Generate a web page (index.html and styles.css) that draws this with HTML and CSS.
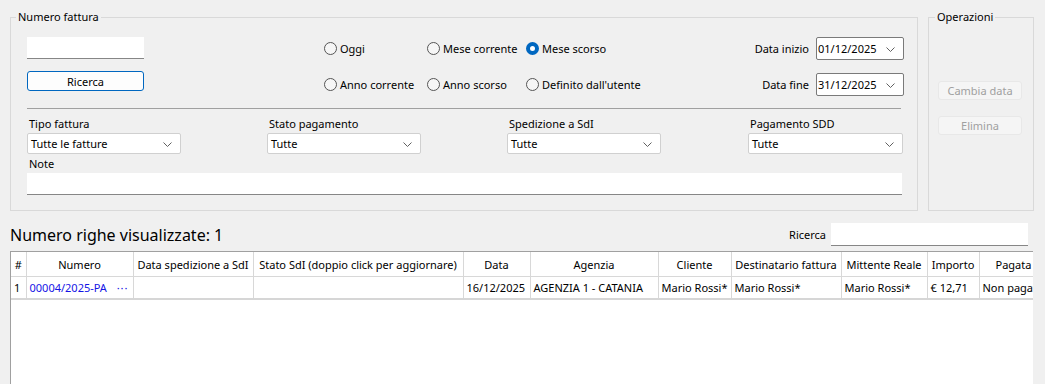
FILE: index.html
```html
<!DOCTYPE html>
<html lang="it">
  <head>
    <meta charset="UTF-8" />
    <title>Fatture</title>
    <link rel="stylesheet" href="styles.css">
  </head>
  <body>
    <div class="top">
      <fieldset class="box box-search">
        <legend>Numero fattura</legend>

        <div class="search-row">
          <div class="num-col">
            <input type="text" class="flat-input num-input" />
            <button class="btn-primary">Ricerca</button>
          </div>

          <div class="periods">
            <label class="radio"><span class="dot"></span>Oggi</label>
            <label class="radio"><span class="dot"></span>Mese corrente</label>
            <label class="radio"><span class="dot checked"></span>Mese scorso</label>
            <label class="radio"><span class="dot"></span>Anno corrente</label>
            <label class="radio"><span class="dot"></span>Anno scorso</label>
            <label class="radio"><span class="dot"></span>Definito dall'utente</label>
          </div>

          <div class="dates">
            <span class="date-label">Data inizio</span>
            <div class="combo combo-date">01/12/2025<svg class="chev" width="9" height="5" viewBox="0 0 9 5"><polyline points="0.5,0.5 4.5,4.5 8.5,0.5" /></svg></div>
            <span class="date-label">Data fine</span>
            <div class="combo combo-date">31/12/2025<svg class="chev" width="9" height="5" viewBox="0 0 9 5"><polyline points="0.5,0.5 4.5,4.5 8.5,0.5" /></svg></div>
          </div>
        </div>

        <hr class="sep" />

        <div class="filters">
          <div class="filter">
            <span class="field-label">Tipo fattura</span>
            <div class="combo">Tutte le fatture<svg class="chev" width="9" height="5" viewBox="0 0 9 5"><polyline points="0.5,0.5 4.5,4.5 8.5,0.5" /></svg></div>
          </div>
          <div class="filter">
            <span class="field-label">Stato pagamento</span>
            <div class="combo">Tutte<svg class="chev" width="9" height="5" viewBox="0 0 9 5"><polyline points="0.5,0.5 4.5,4.5 8.5,0.5" /></svg></div>
          </div>
          <div class="filter">
            <span class="field-label">Spedizione a SdI</span>
            <div class="combo">Tutte<svg class="chev" width="9" height="5" viewBox="0 0 9 5"><polyline points="0.5,0.5 4.5,4.5 8.5,0.5" /></svg></div>
          </div>
          <div class="filter">
            <span class="field-label">Pagamento SDD</span>
            <div class="combo combo-wide">Tutte<svg class="chev" width="9" height="5" viewBox="0 0 9 5"><polyline points="0.5,0.5 4.5,4.5 8.5,0.5" /></svg></div>
          </div>
        </div>

        <span class="field-label note-label">Note</span>
        <input type="text" class="flat-input note-input" />
      </fieldset>

      <fieldset class="box box-ops">
        <legend>Operazioni</legend>
        <button class="btn-disabled btn-first" disabled>Cambia data</button>
        <button class="btn-disabled" disabled>Elimina</button>
      </fieldset>
    </div>

    <div class="list-head">
      <h2 class="count">Numero righe visualizzate: 1</h2>
      <span class="search-label">Ricerca</span>
      <input type="text" class="flat-input list-search" />
    </div>

    <div class="grid">
      <table>
        <colgroup>
          <col class="w-idx"><col class="w-num"><col class="w-sped"><col class="w-stato">
          <col class="w-data"><col class="w-agenzia"><col class="w-cliente"><col class="w-dest">
          <col class="w-mitt"><col class="w-importo"><col class="w-pagata">
        </colgroup>
        <thead>
          <tr>
            <th>#</th>
            <th>Numero</th>
            <th>Data spedizione a SdI</th>
            <th>Stato SdI (doppio click per aggiornare)</th>
            <th>Data</th>
            <th>Agenzia</th>
            <th>Cliente</th>
            <th>Destinatario fattura</th>
            <th>Mittente Reale</th>
            <th>Importo</th>
            <th class="th-right">Pagata</th>
          </tr>
        </thead>
        <tbody>
          <tr>
            <td>1</td>
            <td class="link-cell"><span class="link">00004/2025-PA</span><span class="more">···</span></td>
            <td></td>
            <td></td>
            <td>16/12/2025</td>
            <td>AGENZIA 1 - CATANIA</td>
            <td>Mario Rossi*</td>
            <td>Mario Rossi*</td>
            <td>Mario Rossi*</td>
            <td>€ 12,71</td>
            <td>Non pagata</td>
          </tr>
        </tbody>
      </table>
    </div>
  </body>
</html>
```

FILE: styles.css
```css
body {
  margin: 0;
  background: #f0f0f0;
  font-family: "Segoe UI", "Noto Sans", sans-serif;
  font-size: 11px;
  color: #000;
  overflow: hidden;
  height: 384px;
}
.top {
  display: flex;
  gap: 10px;
  padding: 10px 0 0 10px;
}
.box {
  margin: 0;
  border: 1px solid #d9d9d9;
  box-sizing: border-box;
  height: 201px;
}
.box legend {
  padding: 0 2px;
  line-height: 14px;
}
.box-search {
  width: 908px;
  padding: 13px 13px 0 16px;
}
.box-search legend {
  margin-left: -11px;
}
.box-ops {
  width: 106px;
  padding: 0 10px 0 9px;
  display: flex;
  flex-direction: column;
}
.box-ops legend {
  margin-left: -3px;
}
.search-row {
  display: flex;
  height: 60px;
}
.num-col {
  display: flex;
  flex-direction: column;
  gap: 12px;
  width: 117px;
}
.flat-input {
  display: block;
  box-sizing: border-box;
  background: #fff;
  border: none;
  border-bottom: 1px solid #868686;
  margin: 0;
  padding: 0 4px;
  font: inherit;
}
.num-input {
  width: 117px;
  height: 22px;
}
.btn-primary {
  height: 20px;
  width: 117px;
  border: 1px solid #0067c0;
  border-radius: 3px;
  background: #fdfdfd;
  font: inherit;
  padding: 0;
}
.periods {
  margin-left: 180px;
  display: grid;
  grid-template-columns: 103px 99px auto;
  grid-auto-rows: 22px;
  row-gap: 14px;
}
.radio {
  display: flex;
  align-items: center;
  gap: 3px;
  white-space: nowrap;
}
.dot {
  width: 11px;
  height: 11px;
  border: 1px solid #555;
  border-radius: 50%;
  background: #f6f6f6;
}
.dot.checked {
  border: 4px solid #0067c0;
  width: 5px;
  height: 5px;
  background: #fff;
}
.dates {
  margin-left: auto;
  display: grid;
  grid-template-columns: auto 88px;
  grid-auto-rows: 23px;
  column-gap: 7px;
  row-gap: 13px;
  align-items: center;
}
.date-label {
  text-align: right;
}
.combo {
  position: relative;
  box-sizing: border-box;
  height: 21px;
  width: 154px;
  background: #fff;
  border: 1px solid #d0d0d0;
  border-radius: 2px;
  padding: 0 3px;
  line-height: 19px;
  white-space: nowrap;
}
.combo-date {
  width: 88px;
  height: 23px;
  line-height: 21px;
  border-color: #7a7a7a;
  padding-left: 1px;
}
.combo-wide {
  width: 155px;
}
.chev {
  position: absolute;
  right: 8px;
  top: 50%;
  margin-top: -2px;
  fill: none;
  stroke: #606060;
  stroke-width: 1;
}
.sep {
  margin: 11px 3px 0 0;
  border: none;
  border-top: 1px solid #a0a0a0;
  height: 0;
}
.filters {
  display: grid;
  grid-template-columns: 240px 240px 241px 1fr;
  margin-top: 7px;
}
.filter {
  display: flex;
  flex-direction: column;
}
.field-label {
  display: block;
  line-height: 15px;
  margin-bottom: 2px;
  padding-left: 2px;
}
.note-label {
  margin-top: 2px;
}
.note-input {
  width: 875px;
  height: 22px;
}
.btn-disabled {
  width: 84px;
  height: 19px;
  border: 1px solid #e8e8e8;
  border-radius: 3px;
  background: #f5f5f5;
  color: #a0a0a0;
  font: inherit;
  padding: 0;
}
.btn-first {
  margin-top: 57px;
  margin-bottom: 16px;
}
.list-head {
  display: flex;
  align-items: center;
  height: 25px;
  margin: 11px 17px 4px 10px;
}
.count {
  margin: 0;
  font-size: 16px;
  font-weight: normal;
}
.search-label {
  margin-left: auto;
  margin-right: 5px;
}
.list-search {
  width: 197px;
  height: 23px;
}
.grid {
  margin-left: 10px;
  width: 1023px;
  height: 140px;
  background: #fff;
  border-top: 1px solid #a0a0a0;
  border-left: 1px solid #a0a0a0;
  overflow: hidden;
  box-sizing: border-box;
}
table {
  border-collapse: collapse;
  table-layout: fixed;
  width: 1051px;
}
.w-idx { width: 15px; }
.w-num { width: 107px; }
.w-sped { width: 120px; }
.w-stato { width: 210px; }
.w-data { width: 67px; }
.w-agenzia { width: 128px; }
.w-cliente { width: 73px; }
.w-dest { width: 110px; }
.w-mitt { width: 86px; }
.w-importo { width: 52px; }
.w-pagata { width: 83px; }
th, td {
  border-right: 1px solid #d8d8d8;
  padding: 0 3px;
  white-space: nowrap;
  overflow: hidden;
  text-align: left;
}
th {
  height: 24px;
  font-weight: normal;
  text-align: center;
  border-bottom: 1px solid #d8d8d8;
}
th.th-right {
  text-align: left;
  padding-left: 16px;
}
td {
  height: 21px;
  border-bottom: 2px solid #d6d6d6;
}
.link-cell {
  position: relative;
}
.link {
  color: #1414e6;
}
.more {
  position: absolute;
  right: 4px;
  color: #1414e6;
  letter-spacing: 1px;
}
```
